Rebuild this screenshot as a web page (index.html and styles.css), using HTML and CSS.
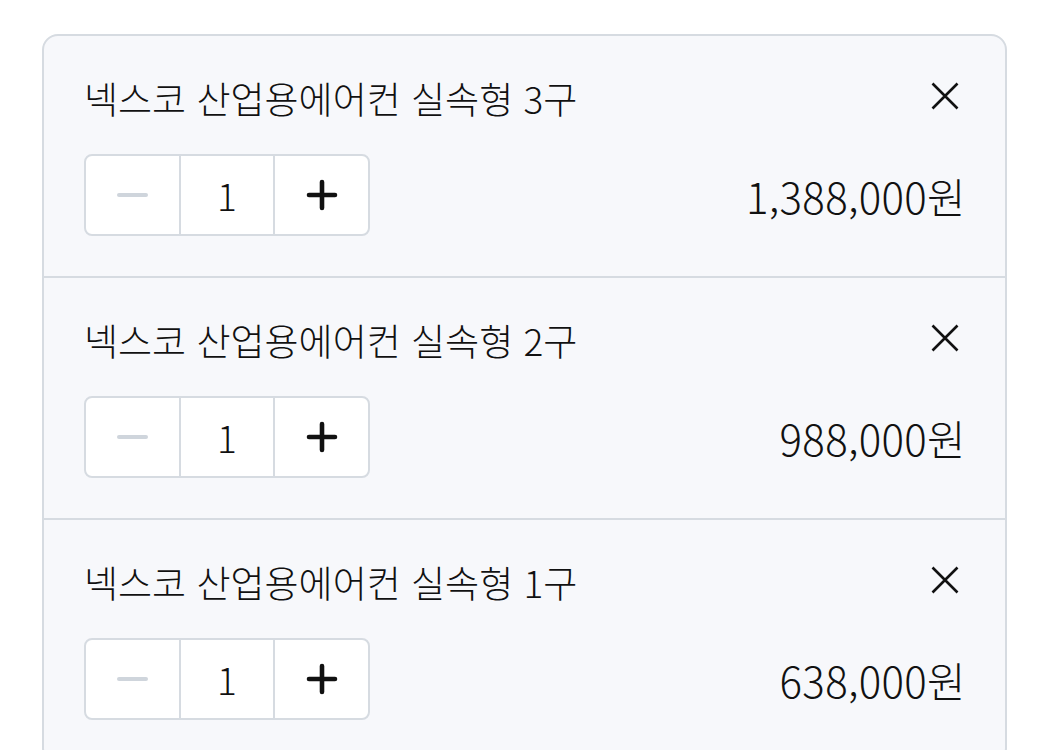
FILE: index.html
```html
<!DOCTYPE html>
<html lang="ko">
<head>
<meta charset="utf-8">
<link rel="stylesheet" href="styles.css">
</head>
<body>
<div class="card">
  <div class="item">
    <div class="top">
      <div class="title">넥스코 산업용에어컨 실속형 3구</div>
      <button class="close" aria-label="삭제"><svg viewBox="0 0 28 28" width="28" height="28"><path d="M1.5 1.5L26.5 26.5M26.5 1.5L1.5 26.5" stroke="#111" stroke-width="2.6" fill="none"/></svg></button>
    </div>
    <div class="bottom">
      <div class="stepper">
        <div class="cell minus"><span class="bar"></span></div>
        <div class="cell qty">1</div>
        <div class="cell plus"><svg viewBox="0 0 32 32" width="32" height="32"><path d="M16 3V29M3 16H29" stroke="#111" stroke-width="4.6" stroke-linecap="round"/></svg></div>
      </div>
      <div class="price">1,388,000원</div>
    </div>
  </div>
  <div class="item">
    <div class="top">
      <div class="title">넥스코 산업용에어컨 실속형 2구</div>
      <button class="close" aria-label="삭제"><svg viewBox="0 0 28 28" width="28" height="28"><path d="M1.5 1.5L26.5 26.5M26.5 1.5L1.5 26.5" stroke="#111" stroke-width="2.6" fill="none"/></svg></button>
    </div>
    <div class="bottom">
      <div class="stepper">
        <div class="cell minus"><span class="bar"></span></div>
        <div class="cell qty">1</div>
        <div class="cell plus"><svg viewBox="0 0 32 32" width="32" height="32"><path d="M16 3V29M3 16H29" stroke="#111" stroke-width="4.6" stroke-linecap="round"/></svg></div>
      </div>
      <div class="price">988,000원</div>
    </div>
  </div>
  <div class="item">
    <div class="top">
      <div class="title">넥스코 산업용에어컨 실속형 1구</div>
      <button class="close" aria-label="삭제"><svg viewBox="0 0 28 28" width="28" height="28"><path d="M1.5 1.5L26.5 26.5M26.5 1.5L1.5 26.5" stroke="#111" stroke-width="2.6" fill="none"/></svg></button>
    </div>
    <div class="bottom">
      <div class="stepper">
        <div class="cell minus"><span class="bar"></span></div>
        <div class="cell qty">1</div>
        <div class="cell plus"><svg viewBox="0 0 32 32" width="32" height="32"><path d="M16 3V29M3 16H29" stroke="#111" stroke-width="4.6" stroke-linecap="round"/></svg></div>
      </div>
      <div class="price">638,000원</div>
    </div>
  </div>
</div>
</body>
</html>
```
FILE: styles.css
```css
html, body {
  margin: 0;
  padding: 0;
  background: #ffffff;
}
body {
  font-family: "Noto Sans CJK KR", "Noto Sans", sans-serif;
  color: #111111;
  padding: 34px 41px 0 42px;
  overflow: hidden;
  height: 750px;
  box-sizing: border-box;
}
.card {
  background: #f7f8fb;
  border: 2px solid #d6dbe1;
  border-radius: 16px;
}
.item {
  padding: 38px 44px 40px 40px;
  border-bottom: 2px solid #d6dbe1;
}
.top {
  display: flex;
  justify-content: space-between;
  align-items: center;
  height: 48px;
}
.title {
  font-size: 37px;
  font-weight: 300;
  line-height: 48px;
  letter-spacing: 0;
}
.close {
  border: 0;
  background: none;
  padding: 0;
  width: 28px;
  height: 28px;
  margin-top: -4px;
  margin-right: 2px;
  display: flex;
}
.bottom {
  margin-top: 32px;
  display: flex;
  justify-content: space-between;
  align-items: center;
}
.stepper {
  display: flex;
  width: 286px;
  height: 82px;
  box-sizing: border-box;
  border: 2px solid #d6dbe1;
  border-radius: 8px;
  background: #ffffff;
  overflow: hidden;
}
.cell {
  flex: 1;
  display: flex;
  align-items: center;
  justify-content: center;
}
.cell + .cell {
  border-left: 2px solid #d6dbe1;
}
.bar {
  width: 31px;
  height: 4px;
  border-radius: 2px;
  background: #cfd5dc;
}
.qty {
  font-size: 37px;
  font-weight: 300;
}
.price {
  font-size: 42px;
  font-weight: 300;
  letter-spacing: 0.3px;
  margin-right: -5px;
}
```
